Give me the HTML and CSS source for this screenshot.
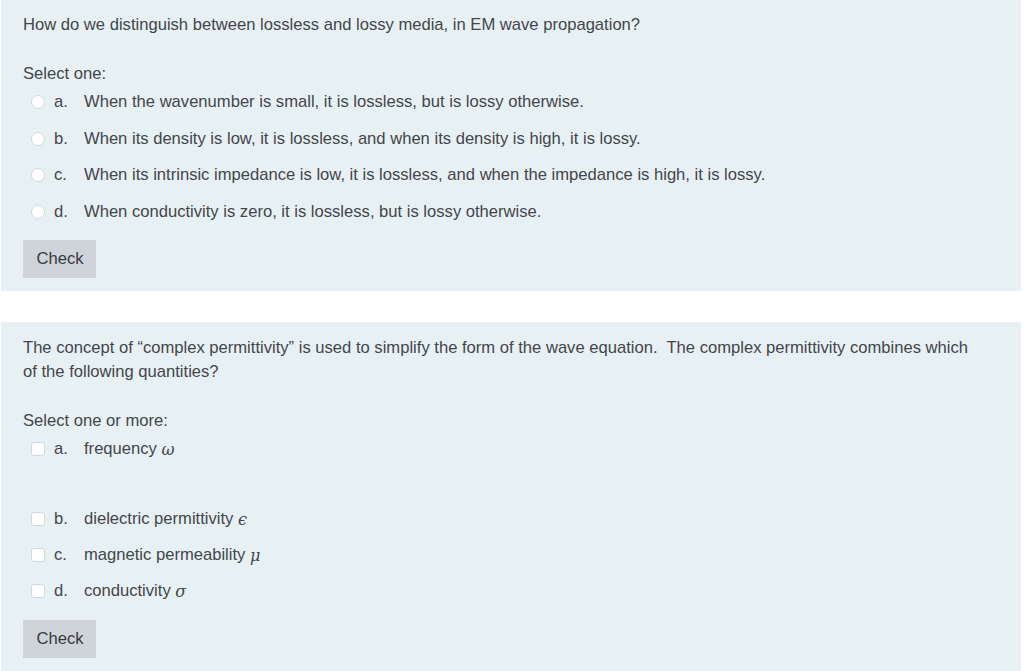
FILE: index.html
```html
<!doctype html>
<html>
<head>
<meta charset="UTF-8">
<title>Quiz</title>
<link rel="stylesheet" href="styles.css">
</head>
<body>
<div class="que">
    <div class="qtext">How do we distinguish between lossless and lossy media, in EM wave propagation?</div>
    <div class="prompt">Select one:</div>
    <ul class="answer">
        <li><span class="radio"></span><span class="num">a.</span>When the wavenumber is small, it is lossless, but is lossy otherwise.</li>
        <li><span class="radio"></span><span class="num">b.</span>When its density is low, it is lossless, and when its density is high, it is lossy.</li>
        <li><span class="radio"></span><span class="num">c.</span>When its intrinsic impedance is low, it is lossless, and when the impedance is high, it is lossy.</li>
        <li><span class="radio"></span><span class="num">d.</span>When conductivity is zero, it is lossless, but is lossy otherwise.</li>
    </ul>
    <button class="check">Check</button>
</div>
<div class="que second">
    <div class="qtext">The concept of &ldquo;complex permittivity&rdquo; is used to simplify the form of the wave equation.&nbsp; The complex permittivity combines which of the following quantities?</div>
    <div class="prompt">Select one or more:</div>
    <ul class="answer">
        <li class="tall"><span class="box"></span><span class="num">a.</span>frequency&nbsp;<i class="math">&omega;</i></li>
        <li><span class="box"></span><span class="num">b.</span>dielectric permittivity&nbsp;<i class="math">&#x3F5;</i></li>
        <li><span class="box"></span><span class="num">c.</span>magnetic permeability&nbsp;<i class="math">&mu;</i></li>
        <li><span class="box"></span><span class="num">d.</span>conductivity&nbsp;<i class="math">&sigma;</i></li>
    </ul>
    <button class="check">Check</button>
</div>
</body>
</html>
```

FILE: styles.css
```css
body,div,ul,li{margin:0;padding:0;}
ul{list-style-type:none;}
body{background:#fff;font:16.6px/24px "Liberation Sans",Arial,sans-serif;color:#43464a;}
.que{background:#e7f1f4;margin:0 3px 31px 1px;padding:13px 22px 13px;}
.qtext{line-height:24px;max-width:960px;}
.prompt{line-height:20px;margin-top:27px;}
.second{padding-top:14px;}
.answer li{display:flex;align-items:center;height:36.6px;}
.second .answer li{height:36px;}
.second .answer li.tall{height:36px;padding-bottom:34px;}
.answer .num{width:30px;}
.radio,.box{width:14px;height:14px;margin:0 9px 0 8px;background:#fff;border:1px solid #d3d8db;box-sizing:border-box;flex:none;}
.radio{border-radius:50%;}
.box{border-radius:3px;}
.math{font:italic 16px "DejaVu Serif","Liberation Serif",serif;}
.check{display:block;margin-top:10px;height:38px;width:73px;border:0;background:#ced4da;color:#373a3c;font:16.6px "Liberation Sans",Arial,sans-serif;padding:0 0 0 1px;}
.second .check{margin-top:11px;}
```
